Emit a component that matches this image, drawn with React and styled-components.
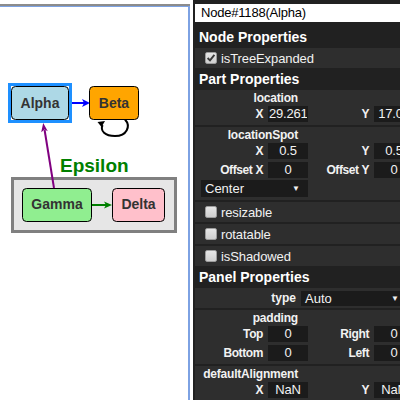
import React from 'react';
import styled, { createGlobalStyle } from 'styled-components';

const GlobalStyle = createGlobalStyle`
  html, body { margin: 0; padding: 0; background: #fff; }
  body { font-family: "Liberation Sans", Arial, sans-serif; }
`;

const Page = styled.div`
  display: flex;
  width: 400px;
  height: 400px;
  overflow: hidden;
`;

// diagram side
const DiagramFrame = styled.div`
  flex: none;
  width: 190px;
  margin-top: 4px;
  border-top: 2px solid #8c8c8c;
`;

const DiagramCanvas = styled.div`
  height: 100%;
  box-sizing: border-box;
  border-top: 1px solid #7da2e3;
  border-right: 2px solid #7da2e3;
  background: #fff;
  svg { display: block; }
`;

// inspector side
const Inspector = styled.div`
  flex: none;
  width: 225px;
  margin-left: 3px;
  padding: 4px 0 0 2px;
  background: #212121;
  color: #f2f2f2;
  font-family: "Liberation Sans", Arial, sans-serif;
`;

const NameField = styled.div`
  height: 18px;
  line-height: 18px;
  padding-left: 6px;
  background: #fff;
  color: #000;
  font-size: 13px;
  letter-spacing: -0.2px;
`;

const GroupHeader = styled.div`
  height: 22px;
  line-height: 22px;
  margin-top: ${p => (p.$first ? '4px' : '0')};
  padding-left: 4px;
  font-size: 14px;
  font-weight: bold;
  color: #fff;
`;

const CheckRow = styled.div`
  display: flex;
  align-items: center;
  gap: 4px;
  height: 20px;
  padding-left: 10px;
  background: #2e2e2e;
  font-size: 13px;
  letter-spacing: -0.1px;
  & + & { margin-top: 2px; }
`;

const Box = styled.span`
  display: inline-flex;
  align-items: center;
  justify-content: center;
  width: 12px;
  height: 12px;
  box-sizing: border-box;
  border: 1px solid #9c9c9c;
  border-radius: 2px;
  background: linear-gradient(#e6e6e6, #cfcfcf);
`;

const Section = styled.div`
  padding: 2px 6px;
  background: #2e2e2e;
  & + & { margin-top: 2px; }
`;

const SectionTitle = styled.div`
  width: 97px;
  height: 12px;
  line-height: 12px;
  text-align: right;
  font-size: 12px;
  font-weight: bold;
  letter-spacing: -0.2px;
  white-space: nowrap;
`;

const FieldGrid = styled.div`
  display: grid;
  grid-template-columns: 65px 40px 62px 40px;
  grid-auto-rows: 19px;
  column-gap: 2px;
  align-items: center;
`;

const FieldLabel = styled.span`
  padding-right: 3px;
  text-align: right;
  font-size: 12px;
  font-weight: bold;
  letter-spacing: -0.4px;
  white-space: nowrap;
`;

const FieldInput = styled.input`
  width: 40px;
  height: 16px;
  box-sizing: border-box;
  padding: 0 1px;
  border: 0;
  outline: none;
  background: #1b1b1b;
  color: #f2f2f2;
  font: 13px "Liberation Sans", Arial, sans-serif;
  letter-spacing: -0.2px;
  text-align: center;
`;

const Dropdown = styled.div`
  display: flex;
  align-items: center;
  justify-content: space-between;
  box-sizing: border-box;
  width: ${p => p.$width}px;
  height: ${p => p.$height}px;
  padding: 0 ${p => p.$padRight}px 0 4px;
  background: #1b1b1b;
  color: #f2f2f2;
  font-size: 13px;
  grid-column: ${p => p.$span || 'auto'};
  span:last-child { font-size: 8px; }
`;

const PropRow = styled.div`
  display: grid;
  grid-template-columns: 97px auto;
  column-gap: 3px;
  align-items: center;
  height: 20px;
  padding-left: 6px;
  background: #2e2e2e;
`;

const PropLabel = styled.span`
  padding-right: 2px;
  text-align: right;
  font-size: 12px;
  font-weight: bold;
`;

const Check = ({ on }) => (
  <Box>
    {on && (
      <svg width="10" height="10" viewBox="0 0 10 10">
        <path d="M1.6 5 L4 7.4 L8.4 1.8" fill="none" stroke="#3a3a3a" strokeWidth="1.9" />
      </svg>
    )}
  </Box>
);

const Field = ({ label, value }) => (
  <>
    <FieldLabel>{label}</FieldLabel>
    <FieldInput readOnly value={value} />
  </>
);

const nodeText = { fontFamily: '"Liberation Sans", Arial, sans-serif', fontWeight: 'bold', fontSize: 14, fill: '#333' };

const Diagram = () => (
  <svg width="188" height="400">
    <g transform="translate(0,-7)">
      {/* Alpha -> Beta */}
      <line x1="70" y1="103" x2="84" y2="103" stroke="#0000ff" strokeWidth="2" />
      <polygon points="82,99 90,103 82,107 84,103" fill="#0000ff" />
      {/* Beta self loop */}
      <path d="M125 119.5 C131 126 127 136 115 136 C105 136 100 131 102.5 125" fill="none" stroke="#000" strokeWidth="2" />
      <polygon points="97.5,122 105,121 101.5,127" fill="#000" />

      {/* group Epsilon */}
      <text x="60" y="172" style={{ ...nodeText, fontSize: 19, fill: '#008000' }}>Epsilon</text>
      <rect x="12.5" y="178.5" width="163" height="53" fill="#e6e6e6" stroke="#808080" strokeWidth="3" />

      <rect x="22.5" y="188.5" width="69" height="33" rx="4" fill="#90ee90" stroke="#000" />
      <text x="57" y="209" textAnchor="middle" style={nodeText}>Gamma</text>
      <rect x="112.5" y="188.5" width="52" height="33" rx="4" fill="#ffc0cb" stroke="#000" />
      <text x="138.5" y="209" textAnchor="middle" style={nodeText}>Delta</text>
      <line x1="92" y1="205" x2="106" y2="205" stroke="#008000" strokeWidth="2" />
      <polygon points="104,201.5 112,205 104,208.5 106,205" fill="#008000" />

      {/* Gamma -> Alpha */}
      <line x1="54" y1="188" x2="44.6" y2="130" stroke="#800080" strokeWidth="2" />
      <polygon points="43.2,123 47.8,131.2 44.6,129.6 41.2,132.2" fill="#800080" />

      {/* Alpha, selected */}
      <rect x="9.5" y="84.5" width="61" height="37" fill="#fff" stroke="#1e90ff" strokeWidth="3" />
      <rect x="11.5" y="86.5" width="57" height="33" rx="4" fill="#add8e6" stroke="#000" />
      <text x="40" y="107.5" textAnchor="middle" style={nodeText}>Alpha</text>

      <rect x="89.5" y="86.5" width="49" height="33" rx="4" fill="#ffa500" stroke="#000" />
      <text x="114" y="107.5" textAnchor="middle" style={nodeText}>Beta</text>
    </g>
  </svg>
);

export default function App() {
  return (
    <>
      <GlobalStyle />
      <Page>
        <DiagramFrame>
          <DiagramCanvas>
            <Diagram />
          </DiagramCanvas>
        </DiagramFrame>

        <Inspector>
          <NameField>Node#1188(Alpha)</NameField>

          <GroupHeader $first>Node Properties</GroupHeader>
          <CheckRow><Check on />isTreeExpanded</CheckRow>

          <GroupHeader>Part Properties</GroupHeader>
          <Section>
            <SectionTitle>location</SectionTitle>
            <FieldGrid>
              <Field label="X" value="29.26116943359375" />
              <Field label="Y" value="17.08" />
            </FieldGrid>
          </Section>
          <Section>
            <SectionTitle>locationSpot</SectionTitle>
            <FieldGrid>
              <Field label="X" value="0.5" />
              <Field label="Y" value="0.5" />
              <Field label="Offset X" value="0" />
              <Field label="Offset Y" value="0" />
              <Dropdown $span="1 / 3" $width={107} $height={17} $padRight={8}>
                <span>Center</span><span>▼</span>
              </Dropdown>
            </FieldGrid>
          </Section>
          <CheckRow style={{ marginTop: 2 }}><Check />resizable</CheckRow>
          <CheckRow><Check />rotatable</CheckRow>
          <CheckRow><Check />isShadowed</CheckRow>

          <GroupHeader>Panel Properties</GroupHeader>
          <PropRow>
            <PropLabel>type</PropLabel>
            <Dropdown $width={104} $height={15} $padRight={6}>
              <span>Auto</span><span>▼</span>
            </Dropdown>
          </PropRow>
          <Section style={{ marginTop: 2 }}>
            <SectionTitle>padding</SectionTitle>
            <FieldGrid>
              <Field label="Top" value="0" />
              <Field label="Right" value="0" />
              <Field label="Bottom" value="0" />
              <Field label="Left" value="0" />
            </FieldGrid>
          </Section>
          <Section>
            <SectionTitle>defaultAlignment</SectionTitle>
            <FieldGrid>
              <Field label="X" value="NaN" />
              <Field label="Y" value="NaN" />
            </FieldGrid>
          </Section>
        </Inspector>
      </Page>
    </>
  );
}
